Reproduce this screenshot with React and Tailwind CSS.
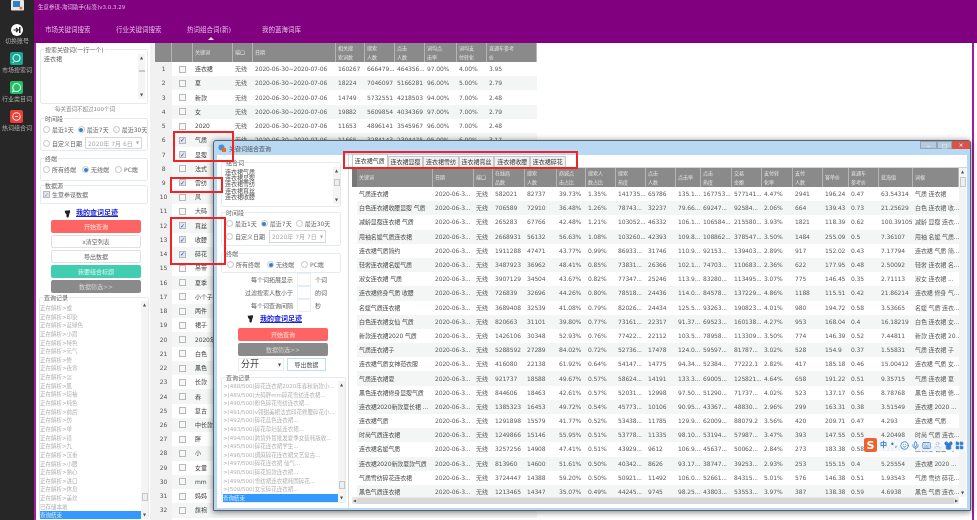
import { Smile, Mic, Keyboard, User, Shirt, LayoutGrid } from 'lucide-react';

const mainRows = [
  '连衣裙|无线|2020-06-30~2020-07-06|160267|666479...|464356...|97.00%|4.00%|3.95',
  '夏|无线|2020-06-30~2020-07-06|18224|7046097|5166281|96.00%|5.00%|2.79',
  '新款|无线|2020-06-30~2020-07-06|14749|5732551|4218503|94.00%|7.00%|2.48',
  '女|无线|2020-06-30~2020-07-06|19882|5609854|4034369|97.00%|7.00%|2.79',
  '2020|无线|2020-06-30~2020-07-06|11653|4896141|3545967|96.00%|7.00%|2.48',
  '气质|无线|2020-06-30~2020-07-06|11665|3284143|2304475|95.00%|6.00%|3.17',
  '显瘦', '法式', '雷纺', '风', '大码', '真丝', '收腰', '碎花', '吊带', '夏季', '小个子', '两件', '裙子', '2020年',
  '白色', '黑色', '长款', '春', '复古', '中长款', '胖', '小', '女童', 'mm', '妈妈', '旗袍', '印花',
].map((r) => r.split('|'));

const checked = ['气质', '显瘦', '雷纺', '真丝', '收腰', '碎花'];

const comboRows = [
  '气质连衣裙|582021|82737|39.73%|1.35%|141735...|65786|135.1...|167753...|577141...|4.47%|2941|196.24|0.47|63.54314|气质 连衣裙',
  '白色连衣裙收腰显瘦 气质|706589|72910|36.48%|1.26%|78743...|32237|79.66...|69247...|92584...|2.06%|664|139.43|0.73|21.25629|白色 连衣裙 收...',
  '减龄显瘦连衣裙 气质|265283|67766|42.48%|1.21%|103052...|46332|106.1...|106584...|215580...|3.93%|1821|118.39|0.62|100.39105|减龄 显瘦 连衣...',
  '甩袖名媛气质连衣裙|2668931|56132|56.63%|1.08%|103260...|42393|109.8...|108862...|378547...|3.50%|1484|255.09|0.5|7.36107|甩袖 名媛 气质...',
  '连衣裙气质简约|1911288|47471|43.77%|0.99%|86933...|31746|110.9...|92153...|139403...|2.89%|917|152.02|0.43|7.17794|连衣裙 气质 简...',
  '轻奢连衣裙名媛气质|3487923|36962|48.41%|0.85%|73831...|26366|102.1...|74703...|110683...|2.36%|622|177.95|0.48|2.50092|轻奢 连衣裙 名...',
  '淑女连衣裙 气质|3907129|34504|43.67%|0.82%|77347...|25246|113.9...|83280...|113495...|3.07%|775|146.45|0.35|2.71113|淑女 连衣裙  ...',
  '连衣裙修身气质 收腰|726839|32696|44.26%|0.80%|78518...|24436|114.0...|84578...|137229...|4.86%|1188|115.51|0.42|21.86214|连衣裙 修身 气...',
  '名媛气质连衣裙|3689408|32539|41.08%|0.79%|82026...|24434|125.5...|93263...|190823...|4.01%|980|194.72|0.58|3.53665|名媛 气质 连衣...',
  '白色连衣裙女仙 气质|820663|31101|39.80%|0.77%|73161...|22317|91.37...|69523...|160138...|4.27%|953|168.04|0.4|16.18219|白色 连衣裙 女...',
  '新款连衣裙2020 气质|1426106|30348|52.93%|0.76%|77422...|22112|103.5...|78958...|113309...|3.50%|774|146.39|0.52|7.44811|新款 连衣裙 20...',
  '气质连衣裙子|5288592|27289|84.02%|0.72%|52736...|17478|124.0...|59597...|81787...|3.02%|528|154.9|0.37|1.55831|气质 连衣裙 子',
  '连衣裙气质女神范衣服|416080|22138|61.92%|0.64%|54147...|14775|94.34...|52384...|77222.1|2.82%|417|185.18|0.46|15.00412|连衣裙 气质 女...',
  '气质连衣裙夏|921737|18588|49.67%|0.57%|58624...|14191|133.3...|69005...|125821...|4.64%|658|191.22|0.51|9.35715|气质 连衣裙 夏',
  '黑色连衣裙修身显瘦气质|844606|18463|42.61%|0.57%|52031...|12998|97.50...|51290...|71737...|4.02%|523|137.17|0.56|8.78768|黑色 连衣裙 修...',
  '连衣裙2020新款夏长裙 ...|1385323|16453|49.72%|0.54%|45773...|10106|90.95...|43367...|48830...|2.96%|299|163.31|0.38|3.51549|连衣裙 2020 ...',
  '连衣裙气质|1291898|15579|41.77%|0.52%|53438...|11785|129.9...|62009...|88079.2|3.56%|420|209.71|0.47|4.293|连衣裙 气质',
  '时尚气质连衣裙|1249866|15146|55.95%|0.51%|53778...|11335|98.10...|53194...|57987...|3.47%|393|147.55|0.55|4.20498|时尚 气质 连衣...',
  '连衣裙名媛气质|3257256|14908|47.41%|0.51%|43929...|9612|106.9...|45637...|50062...|2.84%|273|183.38|0.58|1.25709|连衣裙 名媛 气...',
  '连衣裙2020新款夏款气质|813960|14600|51.61%|0.50%|40342...|8626|93.17...|38747...|39253...|2.93%|253|155.15|0.4|5.25554|连衣裙 2020 ...',
  '气质雪纺碎花连衣裙|3724447|14388|59.20%|0.50%|50921...|11492|106.0...|52661...|84315...|5.01%|576|146.38|0.51|1.93543|气质 雪纺 碎花...',
  '黑色气质连衣裙|1213465|14347|35.07%|0.49%|44245...|9745|98.25...|43803...|53553...|3.97%|387|138.38|0.59|4.6938|黑色 气质 连衣...',
].map((r) => r.split('|'));

const mainHead = ['', '', '关键词', '端口', '日期', '相关搜\n索词数', '搜索\n人数', '点击\n人数', '词均点\n击率', '词均支\n付转化', '直通车参考\n价'];
const comboHead = ['关键词', '日期', '端口', '在线商\n品数', '搜索\n人数', '商城点\n击占比', '搜索人\n数占比', '搜索\n热度', '点击\n人数', '点击率', '点击\n热度', '交易\n金额', '支付转\n化率', '支付\n人数', '客单价', '直通车\n参考价', '蓝海值', '词根'];

const mainCols = 'grid grid-cols-[17px_21px_40px_20px_83px_29px_30px_30px_32px_30px_50px]';
const comboCols = 'grid grid-cols-[76px_41px_19px_32px_32px_29px_30px_30px_30px_25px_31px_30px_31px_30px_26px_30px_34px_46px]';

const parseLog = ['或', '印染', '蓝绿色', '小眉', '特色', '元气', '修', '夜宵', '淡', '肌', '短袖', '纯色', '前后', '仿', '单', '搭', '九', '沉重', '小腰', '熟心', '进口', '休息', '美丝'];
const comboLog = [
  '>(488/500)碎花连衣裙2020年春秋新款小...',
  '>(489/500)大码胖mm碎花雪纺连衣裙...',
  '>(490/500)粉色碎花雪纺连衣裙...',
  '>(491/500)v领甜美裙法式印花修腰碎花小...',
  '>(492/500)碎花蓝色连衣裙...',
  '>(493/500)碎花孕妇装连衣裙...',
  '>(494/500)跨境外贸批发夏季女装韩版收...',
  '>(495/500)碎花连衣裙学生...',
  '>(496/500)绸麻碎花连衣裙文艺复古...',
  '>(497/500)碎花连衣裙 仙气...',
  '>(498/500)碎花短款连衣裙...',
  '>(499/500)雪纺裙连衣裙韩国碎花...',
  '>(500/500)女宝碎花连衣裙...',
];

const Radio = ({ on, label }) => (
  <span className="flex items-center gap-[2px] whitespace-nowrap">
    <span className="flex h-[7px] w-[7px] items-center justify-center rounded-full border border-[#c4c4c4] bg-white">
      {on && <span className="h-[4px] w-[4px] rounded-full bg-[#2f7fc8]" />}
    </span>
    {label}
  </span>
);

const Check = ({ on, muted }) => (
  <span className={`flex h-[7px] w-[7px] items-center justify-center border border-[#b8b8b8] text-[6px] leading-none ${on ? 'bg-[#dfe6f2]' : 'bg-[#f7f7f7]'} ${muted ? 'text-[#999]' : 'text-[#2a3f9a]'}`}>
    {on ? '✓' : ''}
  </span>
);

const Group = ({ title, className, children }) => (
  <fieldset className={`rounded-[2px] border border-[#e3eaf0] ${className}`}>
    <legend className="ml-[3px] px-[1px] text-[6px] leading-[7px] text-[#666]">{title}</legend>
    {children}
  </fieldset>
);

const Foot = () => (
  <svg viewBox="0 0 10 12" className="h-[10px] w-[7px]">
    <path d="M1 1.5 L8.5 0.5 Q9.5 3.5 7.5 6 L6.5 10.5 Q4.5 12 3.5 10 L3.5 6.5 Q1 5 1 1.5Z" fill="#222" />
  </svg>
);

const Btn = ({ color, children }) => (
  <div className={`flex h-[13px] w-[90px] items-center justify-center rounded-[2px] text-[6px] ${color}`}>{children}</div>
);

const ScrollV = ({ thumbTop = 'mt-[8px]', thumbH = 'h-[8px]' }) => (
  <div className="flex h-full w-[7px] shrink-0 flex-col items-center justify-between bg-[#f4f4f4] text-[4px] leading-[8px] text-[#555]">
    <span>▲</span>
    <span className={`w-[6px] border border-[#c8c8c8] bg-[#eee] ${thumbH} ${thumbTop}`} />
    <span className="flex-1" />
    <span>▼</span>
  </div>
);

const SideItem = ({ label, children, top }) => (
  <div className={`flex flex-col items-center ${top}`}>
    {children}
    <span className="mt-[1px] whitespace-nowrap text-[6px] leading-[8px] text-[#a8a8a8]">{label}</span>
  </div>
);

const Sidebar = () => (
  <div className="flex w-[34px] shrink-0 flex-col items-center bg-[#272727]">
    <svg viewBox="0 0 13 11" className="h-[11px] w-[13px]">
      <rect x="0" y="0" width="13" height="10.5" rx="1" fill="#e8e8e8" />
      <rect x="2" y="1" width="7" height="6" fill="#2f80c8" />
      <circle cx="10" cy="8" r="1.6" fill="#e8792d" />
    </svg>
    <SideItem label="切换账号" top="mt-[13px]">
      <svg viewBox="0 0 12 12" className="h-[12px] w-[12px]">
        <circle cx="6" cy="6" r="6" fill="#fff" />
        <path d="M2.5 6h4M5 4l2.2 2L5 8" stroke="#222" strokeWidth="1.2" fill="none" />
        <rect x="8" y="3" width="1.5" height="6" fill="#222" />
      </svg>
    </SideItem>
    <SideItem label="市场搜索词" top="mt-[7px]">
      <svg viewBox="0 0 13 13" className="h-[13px] w-[13px]">
        <rect width="13" height="13" rx="2" fill="#19a892" />
        <circle cx="6.5" cy="6" r="3.5" fill="none" stroke="#d8f5ef" strokeWidth="1.1" />
        <path d="M4 9.5 L2.8 11" stroke="#d8f5ef" strokeWidth="1.1" />
      </svg>
    </SideItem>
    <SideItem label="行业类目词" top="mt-[7px]">
      <svg viewBox="0 0 13 13" className="h-[13px] w-[13px]">
        <rect width="13" height="13" rx="2" fill="#22bf66" />
        <path d="M6.5 2.5a4 4 0 1 1-2 7.4L2.8 10.6l.6-1.9a4 4 0 0 1 3.1-6.2Z" fill="none" stroke="#eafff2" strokeWidth="1.1" />
      </svg>
    </SideItem>
    <SideItem label="热词组合词" top="mt-[7px]">
      <svg viewBox="0 0 13 13" className="h-[13px] w-[13px]">
        <rect width="13" height="13" rx="2" fill="#ef3f35" />
        <circle cx="6.5" cy="6.5" r="3.7" fill="none" stroke="#ffe7e4" strokeWidth="1.1" />
        <path d="M5 6.5h3" stroke="#ffe7e4" strokeWidth="1" />
      </svg>
    </SideItem>
  </div>
);

const TopBar = () => (
  <div className="flex h-[43px] shrink-0 flex-col bg-[#800080] text-[#e3bce3]">
    <div className="ml-[4px] mt-[3px] text-[5.5px] leading-[8px]">生意参谋-淘词助手(标签)v3.0.3.29</div>
    <div className="relative mt-[15px] flex text-[6.5px] leading-[9px]">
      <span className="ml-[11px] w-[71px]">市场关键词搜索</span>
      <span className="w-[71px]">行业关键词搜索</span>
      <span className="w-[75px]">热词组合词(新)</span>
      <span>我的蓝海词库</span>
      <span className="absolute left-[174px] top-[11px] h-0 w-0 border-x-[3px] border-b-[3px] border-x-transparent border-b-[#f3e6c8]" />
    </div>
  </div>
);

const LeftPanel = () => (
  <div className="flex w-[121px] shrink-0 flex-col items-start border-l-2 border-r-[5px] border-l-[#a020a0] border-r-[#f1f1f1] bg-white pl-[3px]">
    <Group title="搜索关键词(一行一个)" className="ml-[1px] mt-[3px] h-[58px] w-[108px]">
      <div className="mx-[2px] mt-[1px] flex h-[45px]">
        <div className="flex-1 px-[1px] text-[6px] leading-[9px] text-[#666]">连衣裙</div>
        <ScrollV thumbH="h-0" />
      </div>
    </Group>
    <div className="ml-[16px] mt-[1px] text-[5.5px] leading-[9px] text-[#8a8a8a]">每关置词不超过100个词</div>
    <Group title="时间段" className="ml-[1px] mt-[1px] h-[36px] w-[108px] text-[6px] text-[#666]">
      <div className="ml-[2px] mt-[3px] flex h-[9px] items-center gap-[4px]">
        <Radio label="最近1天" />
        <Radio on label="最近7天" />
        <Radio label="最近30天" />
      </div>
      <div className="ml-[2px] mt-[3px] flex h-[12px] items-center gap-[3px]">
        <Radio label="自定义日期" />
        <span className="flex h-[12px] w-[57px] items-center justify-between whitespace-nowrap border border-[#d8d8d8] px-[2px] text-[#aaa]">2020年 7月 6日<span className="text-[4px]">▼</span></span>
      </div>
    </Group>
    <Group title="终端" className="ml-[1px] mt-[4px] h-[26px] w-[108px] text-[6px] text-[#666]">
      <div className="ml-[2px] mt-[3px] flex h-[9px] items-center gap-[6px]">
        <Radio label="所有终端" />
        <Radio on label="无线端" />
        <Radio label="PC端" />
      </div>
    </Group>
    <Group title="数据源" className="ml-[1px] mt-[1px] h-[22px] w-[108px] text-[6px] text-[#666]">
      <div className="ml-[2px] mt-[1px] flex h-[9px] items-center gap-[2px]">
        <Check on muted />
        生意参谋数据
      </div>
    </Group>
    <div className="ml-[25px] mt-[4px] flex h-[11px] items-center gap-[5px]">
      <Foot />
      <span className="text-[7px] font-bold text-[#1a22e0] underline">我的查词足迹</span>
    </div>
    <div className="ml-[12px] mt-[1px] flex flex-col gap-[2px]">
      <Btn color="bg-[#ff6464] text-[#ffe3d8]">开始查询</Btn>
      <Btn color="border border-[#e0e0e0] bg-white text-[#666]">x清空列表</Btn>
      <Btn color="border border-[#e0e0e0] bg-white text-[#666]">导出数据</Btn>
      <Btn color="bg-[#40cdb0] text-[#d8f5ee]">我要组合标题</Btn>
      <Btn color="bg-[#8a8a8a] text-[#d5d5d5]">数据筛选&gt;&gt;</Btn>
    </div>
    <Group title="查询记录" className="mt-[1px] h-[224px] w-[110px]">
      <div className="flex h-[218px]">
        <div className="min-w-0 flex-1 overflow-hidden pt-[3px] text-[5.5px] leading-[8.65px] text-[#b0b0b0]">
          {parseLog.map((w) => (
            <div key={w} className="h-[8.65px] truncate">正在解析&gt;{w}</div>
          ))}
          <div className="h-[8.65px]">已存储本地</div>
          <div className="h-[8.65px] bg-[#3399ff] text-[#d8ecff]">查询结束</div>
        </div>
        <ScrollV thumbTop="mt-[184px]" thumbH="h-[8px]" />
      </div>
    </Group>
  </div>
);

const HeadCell = ({ text }) => (
  <div className="flex items-center whitespace-pre-line border-r border-[#b5b5b5] pl-[2px] text-[5px] leading-[8.5px] text-[#e4e4e4]">{text}</div>
);

const MainTable = () => (
  <div className="min-w-0 flex-1 bg-white">
    <div className={`${mainCols} h-[19px] w-[382px] bg-[#8a8a8a]`}>
      {mainHead.map((h, i) => <HeadCell key={i} text={h} />)}
    </div>
    {mainRows.map((r, i) => (
      <div key={i} className={`${mainCols} h-[14.24px] w-[382px] items-center text-[6px] leading-[14px] tracking-[-0.12px] text-[#5c5c5c] ${i % 2 ? 'bg-[#f4f6f5]' : 'bg-white'}`}>
        <span className="flex h-full items-center justify-center bg-[#f1f1f1] text-[#555]">{i + 1}</span>
        <span className="flex justify-center"><Check on={checked.includes(r[0])} /></span>
        {r.map((c, j) => (
          <span key={j} className={`overflow-hidden whitespace-nowrap pl-[2px] ${j === 0 ? 'text-[#444]' : ''}`}>{c}</span>
        ))}
      </div>
    ))}
  </div>
);

const TABS = ['连衣裙气质', '连衣裙显瘦', '连衣裙雪纺', '连衣裙真丝', '连衣裙收腰', '连衣裙碎花'];

const OptionRow = ({ label, unit }) => (
  <div className="flex h-[13px] items-center">
    <span className="w-[72px] whitespace-nowrap text-right">{label}</span>
    <span className="mx-[4px] h-[13px] w-[14px] border border-[#e8eef4] bg-white" />
    <span>{unit}</span>
  </div>
);

const ComboLeft = () => (
  <div className="flex w-[132px] shrink-0 flex-col items-start border-r border-[#d8d8d8] pl-[4px] text-[6px] text-[#666]">
    <Group title="组合词" className="mt-[4px] h-[48px] w-[120px]">
      <div className="ml-[3px] mt-[1px] flex h-[37px]">
        <div className="flex-1 pt-[2px] text-[6px] leading-[6.2px] text-[#555]">
          {TABS.slice(0, 5).map((t) => <div key={t}>{t}</div>)}
        </div>
        <ScrollV thumbTop="mt-[4px]" thumbH="h-[7px]" />
      </div>
    </Group>
    <Group title="时间段" className="mt-[2px] h-[37px] w-[120px]">
      <div className="ml-[4px] mt-[3px] flex h-[9px] items-center gap-[4px]">
        <Radio label="最近1天" />
        <Radio on label="最近7天" />
        <Radio label="最近30天" />
      </div>
      <div className="ml-[4px] mt-[2px] flex h-[13px] items-center gap-[4px]">
        <Radio label="自定义日期" />
        <span className="flex h-[13px] w-[57px] items-center justify-between whitespace-nowrap border border-[#d8d8d8] px-[2px] text-[#aaa]">2020年 7月 7日<span className="text-[4px]">▼</span></span>
      </div>
    </Group>
    <Group title="终端" className="mt-[4px] h-[23px] w-[120px]">
      <div className="ml-[5px] mt-[3px] flex h-[9px] items-center gap-[7px]">
        <Radio label="所有终端" />
        <Radio on label="无线端" />
        <Radio label="PC端" />
      </div>
    </Group>
    <OptionRow label="每个词拓展显示" unit="个词" />
    <OptionRow label="过滤搜索人数小于" unit="的词" />
    <OptionRow label="每个词查询间隔" unit="秒" />
    <div className="ml-[26px] mt-[2px] flex h-[10px] items-center gap-[6px]">
      <Foot />
      <span className="text-[7px] font-bold text-[#1a22e0] underline">我的查词足迹</span>
    </div>
    <div className="ml-[17px] mt-[4px] flex flex-col gap-[2px]">
      <Btn color="bg-[#ff6464] text-[#ffe3d8]">开始查询</Btn>
      <Btn color="bg-[#8a8a8a] text-[#d5d5d5]">数据筛选&gt;&gt;</Btn>
    </div>
    <div className="ml-[17px] mt-[2px] flex h-[13px] items-center gap-[3px]">
      <span className="flex h-[13px] w-[46px] items-center justify-between border border-[#ececec] px-[2px] text-[9px] text-[#444]">分开<span className="text-[4px]">▼</span></span>
      <span className="flex h-[13px] w-[39px] items-center justify-center border border-[#bcdcf5] text-[#555]">导出数据</span>
    </div>
    <Group title="查询记录" className="mt-[3px] h-[129px] w-[125px]">
      <div className="flex h-[121px] pl-[1px]">
        <div className="min-w-0 flex-1 overflow-hidden pt-[1px] text-[5.5px] leading-[8.6px] text-[#b0b0b0]">
          {comboLog.map((l) => <div key={l} className="h-[8.6px] overflow-hidden whitespace-nowrap">{l}</div>)}
          <div className="h-[8.6px] bg-[#3399ff] text-[#d8ecff]">查询结束</div>
        </div>
        <ScrollV thumbTop="mt-[92px]" thumbH="h-[8px]" />
      </div>
    </Group>
  </div>
);

const ComboRight = () => (
  <div className="flex min-w-0 flex-1 flex-col pl-[3px]">
    <div className="flex h-[13px] items-end border-b border-[#d4d4d4] text-[6px] text-[#444]">
      {TABS.map((t, i) => (
        <span key={t} className={`flex w-[35.6px] items-center justify-center whitespace-nowrap border border-b-0 border-[#c8c8c8] leading-[8px] ${i === 0 ? 'h-[13px] bg-white' : 'h-[11px] bg-[#f0f0f0]'}`}>{t}</span>
      ))}
    </div>
    <div className="flex h-[329px]">
      <div className="flex w-[607px] flex-col overflow-hidden">
        <div className="flex h-[19px] shrink-0">
          <span className="w-[5px] bg-[#777]" />
          <div className={`${comboCols} flex-1 bg-[#8a8a8a]`}>
            {comboHead.map((h) => <HeadCell key={h} text={h} />)}
          </div>
        </div>
        {comboRows.map((r, i) => (
          <div key={i} className={`${comboCols} ml-[5px] h-[14.2px] shrink-0 items-center text-[6px] leading-[14px] tracking-[-0.12px] text-[#5c5c5c] ${i % 2 ? 'bg-[#f4f6f5]' : 'bg-white'}`}>
            <span className="overflow-hidden whitespace-nowrap pl-[2px] text-[#505050]">{r[0]}</span>
            <span className="overflow-hidden whitespace-nowrap pl-[2px]">2020-06-3...</span>
            <span className="overflow-hidden whitespace-nowrap pl-[2px]">无线</span>
            {r.slice(1).map((c, j) => (
              <span key={j} className="overflow-hidden whitespace-nowrap pl-[2px]">{c}</span>
            ))}
          </div>
        ))}
      </div>
      <div className="w-[7px]"><ScrollV thumbTop="mt-[1px]" thumbH="h-[10px]" /></div>
    </div>
    <div className="flex h-[7px] w-[607px] items-center bg-[#e8e8e8] text-[4px] text-[#555]">
      <span className="w-[5px] text-center">◀</span>
      <span className="h-[6px] flex-1 bg-[#d8d8d8]" />
      <span className="w-[5px] text-center">▶</span>
    </div>
  </div>
);

const ComboDialog = () => (
  <div className="absolute left-[213px] top-[140px] flex h-[371px] w-[758px] flex-col rounded-t-[3px] border border-[#56646f] bg-[#b9d8f4] shadow-[0_1px_6px_rgba(0,0,0,0.55)]">
    <div className="relative flex h-[14px] shrink-0 items-center gap-[3px] pl-[4px] text-[6px] text-[#555]">
      <svg viewBox="0 0 8 8" className="h-[8px] w-[8px]">
        <circle cx="3.5" cy="3.5" r="3" fill="#4b8fd0" />
        <rect x="4" y="4" width="4" height="4" fill="#e8692f" />
      </svg>
      关键词组合查询
      <div className="absolute right-0 top-0 flex h-[8px] text-[6px] leading-[8px] text-white">
        <span className="flex w-[17px] justify-center border border-[#8fa5b8] bg-[#b6cadb]">–</span>
        <span className="flex w-[15px] justify-center border border-[#8fa5b8] bg-[#b6cadb]">□</span>
        <span className="flex w-[18px] justify-center bg-[#d9534a]">×</span>
      </div>
    </div>
    <div className="relative mx-[3px] flex h-[353px] bg-white">
      <ComboLeft />
      <ComboRight />
    </div>
  </div>
);

const Sogou = () => (
  <div className="absolute left-[864px] top-[438px] flex h-[14px] items-center">
    <span className="flex h-[14px] w-[13px] items-center justify-center rounded-[2px] bg-[#f0622c] text-[11px] font-bold leading-none text-white">S</span>
    <div className="ml-[1px] flex h-[11px] w-[89px] items-center gap-[2px] bg-[#f4f8fc]/90 pl-[2px] text-[#2f79c8]">
      <span className="w-[8px] text-[7px] font-bold leading-none">中</span>
      <span className="w-[8px] text-[8px] leading-none">•,</span>
      <Smile className="h-[9px] w-[9px]" />
      <Mic className="h-[9px] w-[9px]" />
      <Keyboard className="h-[9px] w-[9px]" />
      <User className="h-[9px] w-[9px] text-[#b0c4d8]" />
      <Shirt className="h-[9px] w-[9px] fill-[#2f79c8]" />
      <LayoutGrid className="h-[9px] w-[9px] fill-[#2f79c8]" />
    </div>
  </div>
);

const Mark = ({ className }) => <div className={`absolute border-2 border-[#f02424] ${className}`} />;

export default function App() {
  return (
    <div className="relative flex h-[520px] w-[977px] overflow-hidden bg-white font-['DejaVu_Sans','Noto_Sans_CJK_SC',sans-serif] blur-[0.55px]">
      <Sidebar />
      <div className="flex min-w-0 flex-1 flex-col">
        <TopBar />
        <div className="flex min-h-0 flex-1">
          <LeftPanel />
          <MainTable />
          <div className="mr-[3px] w-[2px] bg-[#a020a0]" />
        </div>
      </div>
      <ComboDialog />
      <Sogou />
      <Mark className="left-[173px] top-[131px] h-[31px] w-[61px]" />
      <Mark className="left-[170px] top-[177px] h-[16px] w-[53px]" />
      <Mark className="left-[170px] top-[217px] h-[48px] w-[56px]" />
      <Mark className="left-[343px] top-[151px] h-[18px] w-[235px]" />
    </div>
  );
}
